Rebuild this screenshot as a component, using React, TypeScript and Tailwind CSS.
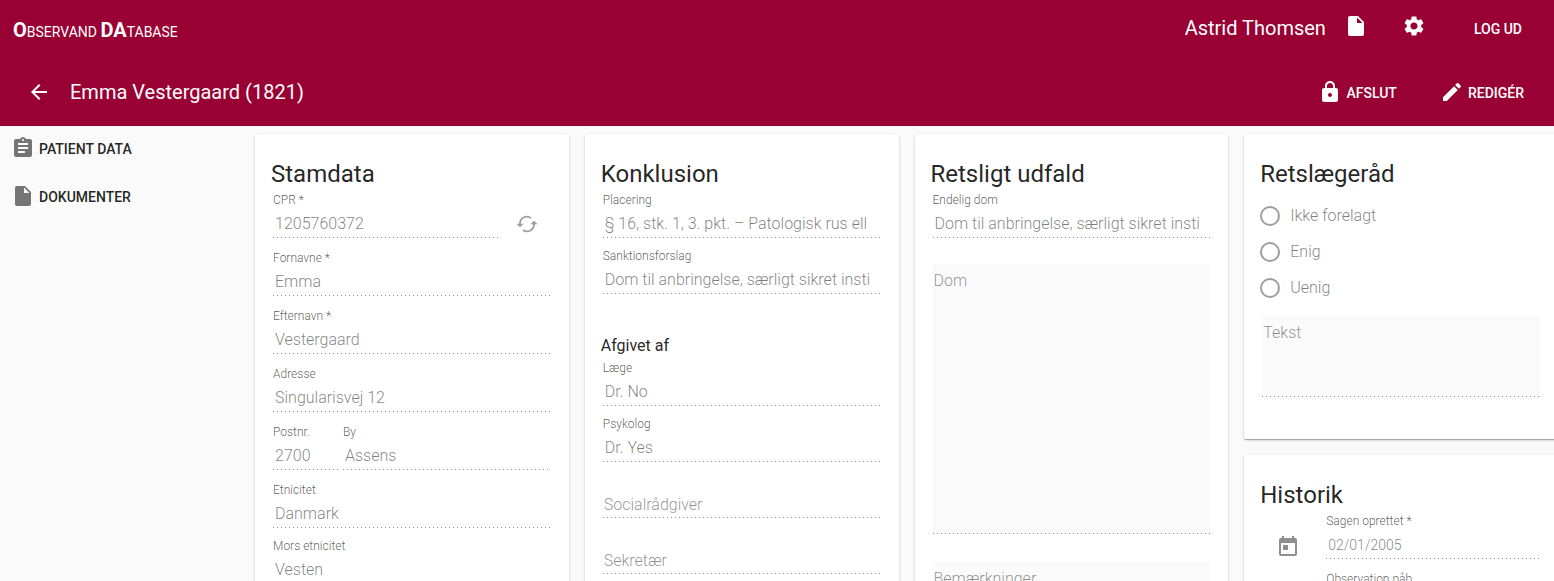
import { useId, type ReactNode } from 'react';
import {
  MdArrowBack,
  MdAssignment,
  MdInsertDriveFile,
  MdLock,
  MdModeEdit,
  MdSettings,
  MdToday,
} from 'react-icons/md';

const dottedLine =
  'bg-[linear-gradient(to_right,rgba(0,0,0,0.45)_0,rgba(0,0,0,0.45)_33%,transparent_33%)] bg-[length:4px_1px] bg-bottom-left bg-repeat-x';

export default function App() {
  return (
    <div className="flex h-screen flex-col bg-[#fafafa] font-[Roboto,sans-serif] text-black/87">
      <Header />
      <div className="flex min-h-0 flex-1">
        <Sidebar />
        <main className="min-w-0 flex-1 overflow-hidden">
          <div className="-mr-3 grid grid-cols-4 gap-4 p-2">
            <Stamdata />
            <Konklusion />
            <RetsligtUdfald />
            <div className="flex flex-col gap-4">
              <Retslaegeraad />
              <Historik />
            </div>
          </div>
        </main>
      </div>
    </div>
  );
}

function Header() {
  return (
    <header className="bg-[#990033] pt-1 pb-0.5 text-white">
      <div className="flex h-14 items-center justify-between pr-8 pl-[13px]">
        <a href="#" className="pb-1 text-sm leading-6 uppercase">
          <b className="text-xl">O</b>bservand <b className="text-xl">DA</b>tabase
        </a>
        <div className="flex items-center pb-2">
          <span className="text-xl">Astrid Thomsen</span>
          <button aria-label="Dokumenter" className="ml-[18px] pb-1">
            <MdInsertDriveFile size={24} />
          </button>
          <button aria-label="Indstillinger" className="ml-[34px] pb-1">
            <MdSettings size={24} />
          </button>
          <button className="ml-12 pt-0.5 text-sm font-medium uppercase">Log ud</button>
        </div>
      </div>
      <div className="flex h-16 items-center justify-between pr-[30px] pl-[27px]">
        <div className="flex items-center gap-[19px]">
          <button aria-label="Tilbage">
            <MdArrowBack size={24} />
          </button>
          <h1 className="text-xl">Emma Vestergaard (1821)</h1>
        </div>
        <div className="flex items-center gap-[43px]">
          <button className="flex items-center gap-1 text-sm font-medium uppercase">
            <MdLock size={24} />
            <span className="pt-0.5">Afslut</span>
          </button>
          <button className="flex items-center gap-1 text-sm font-medium uppercase">
            <MdModeEdit size={24} />
            <span className="pt-0.5">Redigér</span>
          </button>
        </div>
      </div>
    </header>
  );
}

function Sidebar() {
  return (
    <nav className="flex w-[247px] shrink-0 flex-col pl-[11px]">
      <SidebarLink icon={<MdAssignment size={24} />} text="Patient data" />
      <SidebarLink icon={<MdInsertDriveFile size={24} />} text="Dokumenter" />
    </nav>
  );
}

function SidebarLink({ icon, text }: { icon: ReactNode; text: string }) {
  return (
    <a href="#" className="flex h-12 items-center gap-1 pb-0.5 text-sm font-medium uppercase">
      <span className="pb-0.5 text-[#757575]">{icon}</span>
      {text}
    </a>
  );
}

function Card({ title, children }: { title: string; children: ReactNode }) {
  return (
    <section className="rounded-xs bg-white px-4 pt-6 pb-[42px] shadow-[0_1px_3px_0_rgba(0,0,0,0.2),0_1px_1px_0_rgba(0,0,0,0.14),0_2px_1px_-1px_rgba(0,0,0,0.12)]">
      <h2 className="mb-0.5 text-2xl leading-8">{title}</h2>
      {children}
    </section>
  );
}

type FieldProps = {
  label: string;
  value?: string;
  required?: boolean;
  compact?: boolean;
  small?: boolean;
};

function Field({ label, value, required, compact, small }: FieldProps) {
  const id = useId();
  return (
    <div className={`mx-0.5 flex min-w-0 flex-1 flex-col ${compact ? 'mb-2.5' : 'mb-3'}`}>
      <label htmlFor={id} className="h-4 text-xs leading-4 font-light text-black/65">
        {value && label}
        {value && required && ' *'}
      </label>
      <input
        id={id}
        disabled
        aria-label={label}
        defaultValue={value}
        placeholder={label}
        className={`h-[30px] w-full font-light text-black/50 placeholder:text-black/45 ${dottedLine} ${
          value ? 'pt-px pl-0.5' : 'pt-[3px] pl-px'
        } ${small ? 'text-sm' : 'text-base'}`}
      />
    </div>
  );
}

function TextBox({ label, className }: { label: string; className: string }) {
  return (
    <textarea
      disabled
      aria-label={label}
      placeholder={label}
      className={`mx-0.5 block w-[calc(100%-4px)] resize-none bg-[#fafafa] px-px pt-[5px] text-base font-light placeholder:text-black/45 ${dottedLine} ${className}`}
    />
  );
}

function Stamdata() {
  return (
    <Card title="Stamdata">
      <div className="flex items-start">
        <Field label="CPR" value="1205760372" required />
        <button aria-label="Opdater" disabled className="mt-5 mr-3.5 ml-3.5 text-[#9e9e9e]">
          <LoopIcon />
        </button>
      </div>
      <Field label="Fornavne" value="Emma" required />
      <Field label="Efternavn" value="Vestergaard" required />
      <Field label="Adresse" value="Singularisvej 12" />
      <div className="grid grid-cols-[70px_1fr]">
        <Field label="Postnr." value="2700" />
        <Field label="By" value="Assens" />
      </div>
      <Field label="Etnicitet" value="Danmark" compact />
      <Field label="Mors etnicitet" value="Vesten" compact />
    </Card>
  );
}

function Konklusion() {
  return (
    <Card title="Konklusion">
      <Field label="Placering" value="§ 16, stk. 1, 3. pkt. – Patologisk rus ell" compact />
      <Field label="Sanktionsforslag" value="Dom til anbringelse, særligt sikret insti" compact />
      <h3 className="mt-10 mb-0.5 text-base leading-6">Afgivet af</h3>
      <Field label="Læge" value="Dr. No" compact />
      <Field label="Psykolog" value="Dr. Yes" compact />
      <Field label="Socialrådgiver" compact />
      <Field label="Sekretær" compact />
    </Card>
  );
}

function RetsligtUdfald() {
  return (
    <Card title="Retsligt udfald">
      <Field label="Endelig dom" value="Dom til anbringelse, særligt sikret insti" compact />
      <TextBox label="Dom" className="mt-[26px] h-[270px]" />
      <TextBox label="Bemærkninger" className="mt-7 h-[270px]" />
    </Card>
  );
}

function Retslaegeraad() {
  return (
    <Card title="Retslægeråd">
      <fieldset disabled className="mt-4 mb-[18px] flex flex-col gap-4">
        {['Ikke forelagt', 'Enig', 'Uenig'].map((option) => (
          <label key={option} className="flex h-5 items-center gap-2.5 font-light text-black/50">
            <input
              type="radio"
              name="retslaegeraad"
              className="size-5 appearance-none rounded-full border-2 border-[#9e9e9e]"
            />
            {option}
          </label>
        ))}
      </fieldset>
      <TextBox label="Tekst" className="h-[81px]" />
    </Card>
  );
}

function Historik() {
  return (
    <Card title="Historik">
      <DateField label="Sagen oprettet" value="02/01/2005" required />
      <DateField label="Observation påb" value="02/01/2005" />
    </Card>
  );
}

function DateField(props: FieldProps) {
  return (
    <div className="flex items-start">
      <MdToday size={24} className="mt-[22px] mr-6 ml-4 shrink-0 text-[#8e8e8e]" />
      <Field {...props} small />
    </div>
  );
}

function LoopIcon() {
  return (
    <svg width="24" height="24" viewBox="0 0 24 24" fill="none" stroke="currentColor" strokeWidth="1.8">
      <path d="M16 5.9A7 7 0 0 0 5 12M8 18.1A7 7 0 0 0 19 12" />
      <path d="M1.4 11.8h7.2L5 15.2zM15.4 12.2h7.2L19 8.8z" fill="currentColor" stroke="none" />
    </svg>
  );
}
